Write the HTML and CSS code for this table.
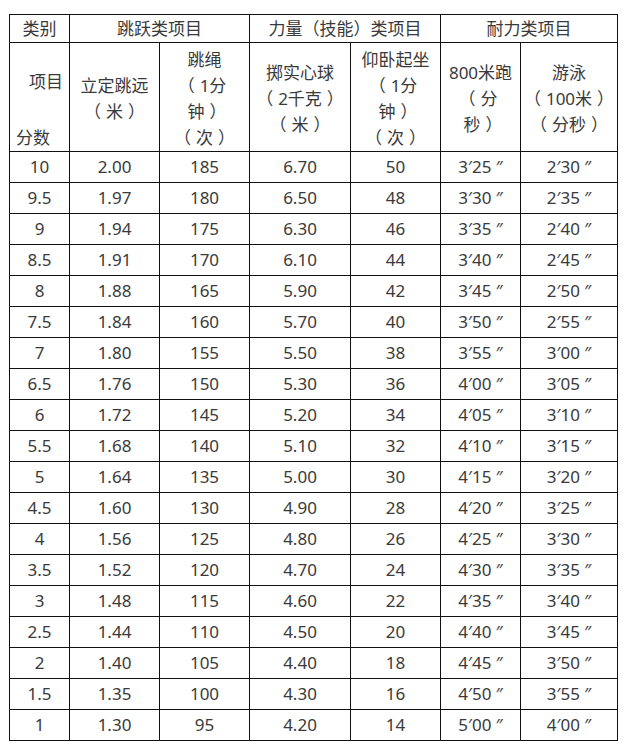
FILE: index.html
```html
<!DOCTYPE html>
<html lang="zh-CN">
<head>
<meta charset="utf-8">
<title>评分表</title>
<link rel="stylesheet" href="styles.css">
</head>
<body>
<table class="score">
<colgroup>
<col class="c1"><col class="c2"><col class="c3"><col class="c4"><col class="c5"><col class="c6"><col class="c7">
</colgroup>
<thead>
<tr class="h1">
<th>类别</th>
<th colspan="2">跳跃类项目</th>
<th colspan="2">力量（技能）类项目</th>
<th colspan="2">耐力类项目</th>
</tr>
<tr class="h2">
<th class="diag"><div class="d-top">项目</div><div class="d-bot">分数</div></th>
<th>立定跳远<br><span class="lp">（</span>米<span class="rp">）</span></th>
<th>跳绳<br><span class="lp">（</span>1分<br>钟<span class="rp">）</span><br><span class="lp">（</span>次<span class="rp">）</span></th>
<th>掷实心球<br><span class="lp">（</span>2千克<span class="rp">）</span><br><span class="lp">（</span>米<span class="rp">）</span></th>
<th>仰卧起坐<br><span class="lp">（</span>1分<br>钟<span class="rp">）</span><br><span class="lp">（</span>次<span class="rp">）</span></th>
<th>800米跑<br><span class="lp">（</span>分<br>秒<span class="rp">）</span></th>
<th>游泳<br><span class="lp">（</span>100米<span class="rp">）</span><br><span class="lp">（</span>分秒<span class="rp">）</span></th>
</tr>
</thead>
<tbody>
<tr><td>10</td><td>2.00</td><td>185</td><td>6.70</td><td>50</td><td>3′25 ″</td><td>2′30 ″</td></tr>
<tr><td>9.5</td><td>1.97</td><td>180</td><td>6.50</td><td>48</td><td>3′30 ″</td><td>2′35 ″</td></tr>
<tr><td>9</td><td>1.94</td><td>175</td><td>6.30</td><td>46</td><td>3′35 ″</td><td>2′40 ″</td></tr>
<tr><td>8.5</td><td>1.91</td><td>170</td><td>6.10</td><td>44</td><td>3′40 ″</td><td>2′45 ″</td></tr>
<tr><td>8</td><td>1.88</td><td>165</td><td>5.90</td><td>42</td><td>3′45 ″</td><td>2′50 ″</td></tr>
<tr><td>7.5</td><td>1.84</td><td>160</td><td>5.70</td><td>40</td><td>3′50 ″</td><td>2′55 ″</td></tr>
<tr><td>7</td><td>1.80</td><td>155</td><td>5.50</td><td>38</td><td>3′55 ″</td><td>3′00 ″</td></tr>
<tr><td>6.5</td><td>1.76</td><td>150</td><td>5.30</td><td>36</td><td>4′00 ″</td><td>3′05 ″</td></tr>
<tr><td>6</td><td>1.72</td><td>145</td><td>5.20</td><td>34</td><td>4′05 ″</td><td>3′10 ″</td></tr>
<tr><td>5.5</td><td>1.68</td><td>140</td><td>5.10</td><td>32</td><td>4′10 ″</td><td>3′15 ″</td></tr>
<tr><td>5</td><td>1.64</td><td>135</td><td>5.00</td><td>30</td><td>4′15 ″</td><td>3′20 ″</td></tr>
<tr><td>4.5</td><td>1.60</td><td>130</td><td>4.90</td><td>28</td><td>4′20 ″</td><td>3′25 ″</td></tr>
<tr><td>4</td><td>1.56</td><td>125</td><td>4.80</td><td>26</td><td>4′25 ″</td><td>3′30 ″</td></tr>
<tr><td>3.5</td><td>1.52</td><td>120</td><td>4.70</td><td>24</td><td>4′30 ″</td><td>3′35 ″</td></tr>
<tr><td>3</td><td>1.48</td><td>115</td><td>4.60</td><td>22</td><td>4′35 ″</td><td>3′40 ″</td></tr>
<tr><td>2.5</td><td>1.44</td><td>110</td><td>4.50</td><td>20</td><td>4′40 ″</td><td>3′45 ″</td></tr>
<tr><td>2</td><td>1.40</td><td>105</td><td>4.40</td><td>18</td><td>4′45 ″</td><td>3′50 ″</td></tr>
<tr><td>1.5</td><td>1.35</td><td>100</td><td>4.30</td><td>16</td><td>4′50 ″</td><td>3′55 ″</td></tr>
<tr><td>1</td><td>1.30</td><td>95</td><td>4.20</td><td>14</td><td>5′00 ″</td><td>4′00 ″</td></tr>
</tbody>
</table>
</body>
</html>
```
FILE: styles.css
```css
html, body {
  margin: 0;
  padding: 0;
  background: #ffffff;
}

body {
  padding: 14px 0 0 9px;
  font-family: "Noto Sans", "Noto Sans CJK SC", sans-serif;
  font-size: 17px;
  color: #3a3a3a;
}

.score {
  border-collapse: collapse;
  table-layout: fixed;
  width: 608px;
}

.c1 { width: 60px; }
.c2 { width: 90px; }
.c3 { width: 90px; }
.c4 { width: 101px; }
.c5 { width: 90px; }
.c6 { width: 80px; }
.c7 { width: 97px; }

.score th,
.score td {
  border: 1px solid #111111;
  padding: 0;
  text-align: center;
  font-weight: normal;
}

.lp {
  margin-left: -5px;
  padding-right: 5px;
}

.rp {
  padding-left: 5px;
  margin-right: -5px;
}

.h1 th {
  height: 27px;
  line-height: 20px;
}

.h2 th {
  height: 108px;
  line-height: 26px;
  padding-top: 3px;
  box-sizing: border-box;
  vertical-align: middle;
}

.h2 th.diag {
  vertical-align: top;
  padding: 26px 6px 0 6px;
}

.d-top {
  text-align: right;
}

.d-bot {
  text-align: left;
  margin-top: 30px;
}

.score td {
  height: 30px;
  line-height: 20px;
  vertical-align: middle;
}
```
